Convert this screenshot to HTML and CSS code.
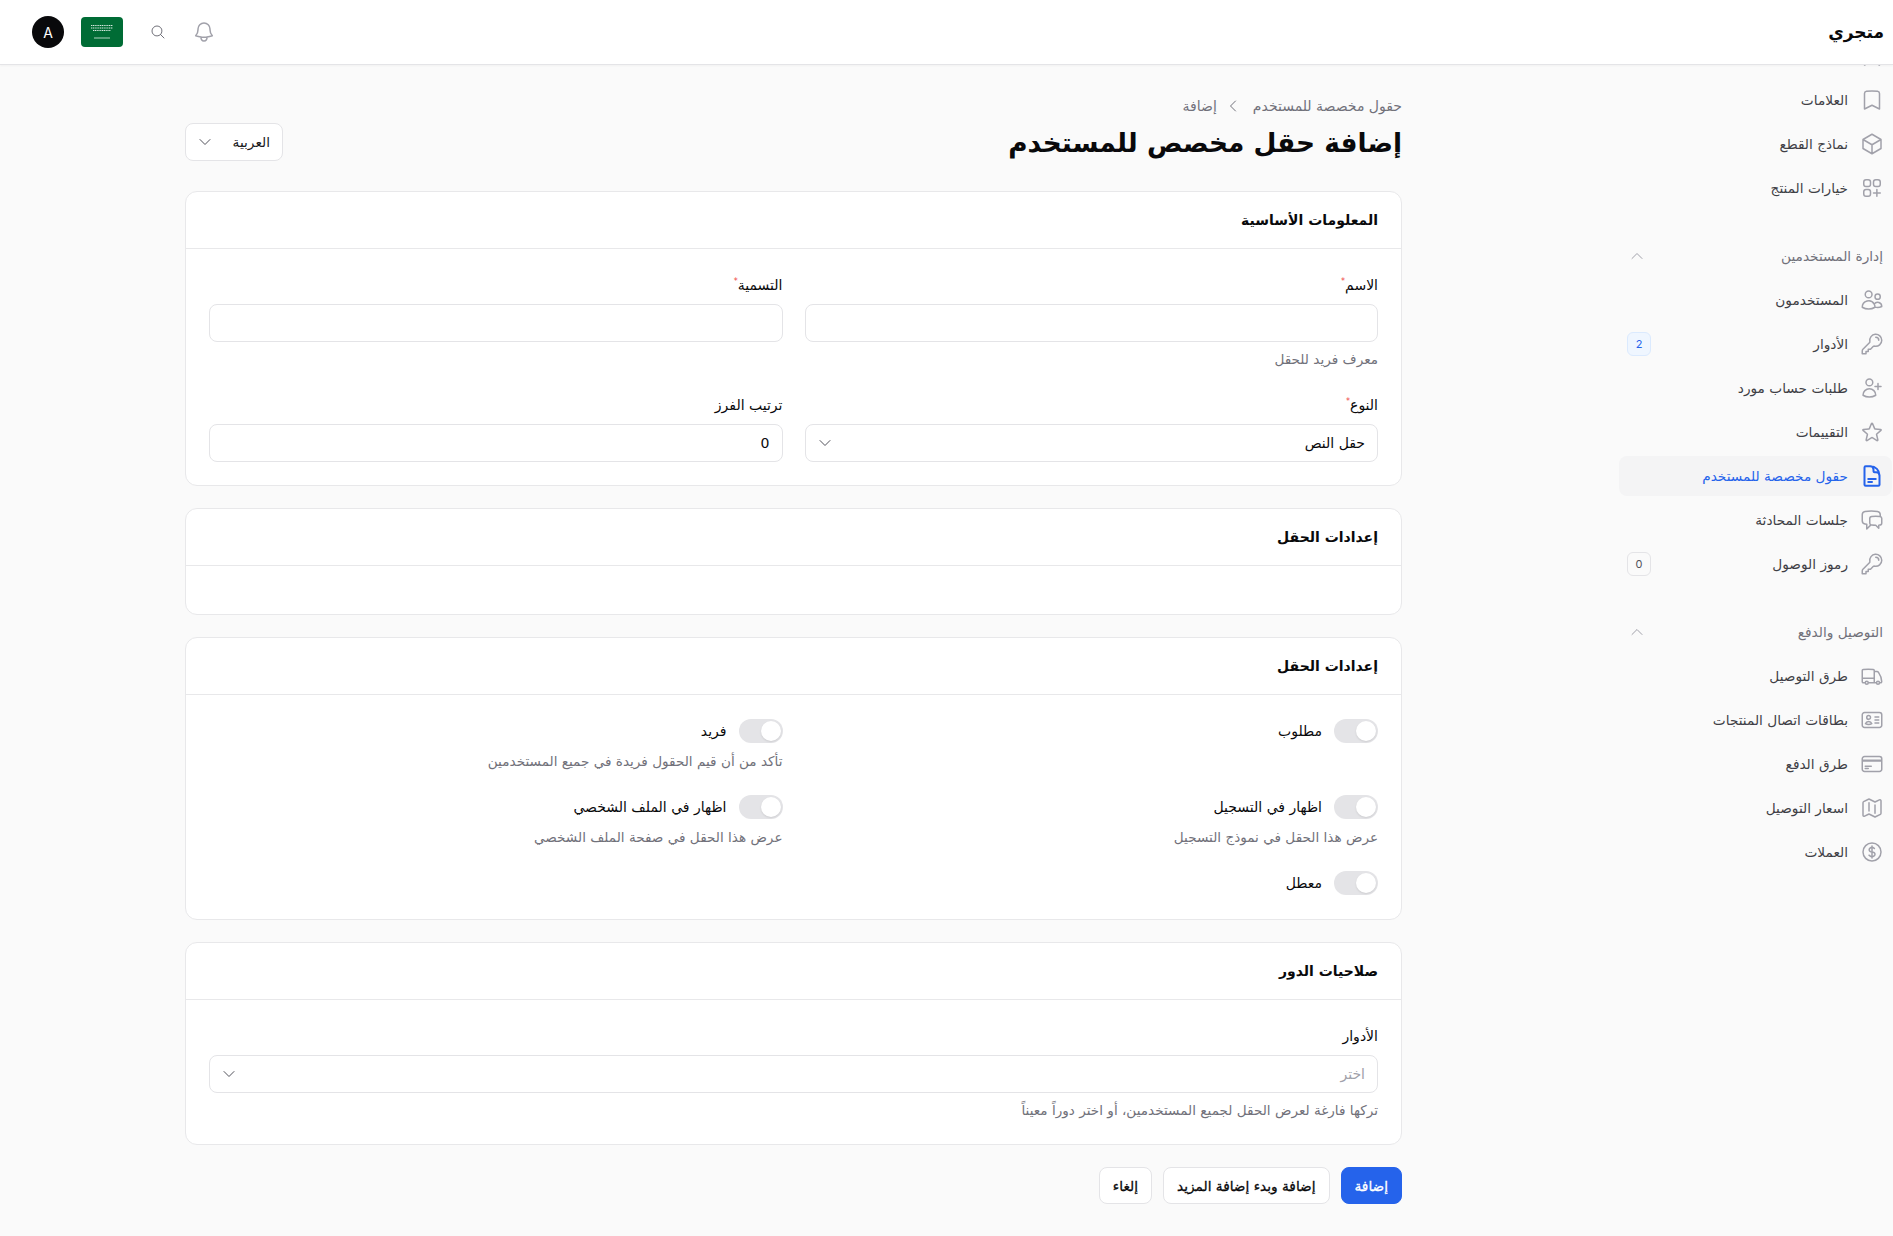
FILE: index.html
```html
<!DOCTYPE html>
<html lang="ar" dir="rtl">
<head>
  <meta charset="UTF-8" />
  <title>إضافة حقل مخصص للمستخدم</title>
  <link rel="stylesheet" href="styles.css">
</head>
<body>

  <svg class="sprite" xmlns="http://www.w3.org/2000/svg">
    <symbol id="i-bookmark" viewBox="0 0 24 24"><path d="M17.593 3.322c1.1.128 1.907 1.077 1.907 2.185V21L12 17.25 4.5 21V5.507c0-1.108.806-2.057 1.907-2.185a48.507 48.507 0 0 1 11.186 0Z"/></symbol>
    <symbol id="i-cube" viewBox="0 0 24 24"><path d="m21 7.5-9-5.25L3 7.5m18 0-9 5.25m9-5.25v9l-9 5.25M3 7.5l9 5.25M3 7.5v9l9 5.25m0-9v9"/></symbol>
    <symbol id="i-squares" viewBox="0 0 24 24"><path d="M13.5 16.875h3.375m0 0h3.375m-3.375 0V13.5m0 6.75v-3.375M6 10.5h2.25a2.25 2.25 0 0 0 2.25-2.25V6a2.25 2.25 0 0 0-2.25-2.25H6A2.25 2.25 0 0 0 3.75 6v2.25A2.25 2.25 0 0 0 6 10.5Zm0 9.75h2.25A2.25 2.25 0 0 0 10.5 18v-2.25a2.25 2.25 0 0 0-2.25-2.25H6a2.25 2.25 0 0 0-2.25 2.25V18A2.25 2.25 0 0 0 6 20.25Zm9.75-9.75H18a2.25 2.25 0 0 0 2.25-2.25V6A2.25 2.25 0 0 0 18 3.75h-2.25A2.25 2.25 0 0 0 13.5 6v2.25a2.25 2.25 0 0 0 2.25 2.25Z"/></symbol>
    <symbol id="i-users" viewBox="0 0 24 24"><path d="M15 19.128a9.38 9.38 0 0 0 2.625.372 9.337 9.337 0 0 0 4.121-.952 4.125 4.125 0 0 0-7.533-2.493M15 19.128v-.003c0-1.113-.285-2.16-.786-3.07M15 19.128v.106A12.318 12.318 0 0 1 8.624 21c-2.331 0-4.512-.645-6.374-1.766l-.001-.109a6.375 6.375 0 0 1 11.964-3.07M12 6.375a3.375 3.375 0 1 1-6.75 0 3.375 3.375 0 0 1 6.75 0Zm8.25 2.25a2.625 2.625 0 1 1-5.25 0 2.625 2.625 0 0 1 5.25 0Z"/></symbol>
    <symbol id="i-key" viewBox="0 0 24 24"><path d="M15.75 5.25a3 3 0 0 1 3 3m3 0a6 6 0 0 1-7.029 5.912c-.563-.097-1.159.026-1.563.43L10.5 17.25H8.25v2.25H6v2.25H2.25v-2.818c0-.597.237-1.17.659-1.591l6.499-6.499c.404-.404.527-1 .43-1.563A6 6 0 1 1 21.75 8.25Z"/></symbol>
    <symbol id="i-user-plus" viewBox="0 0 24 24"><path d="M18 7.5v3m0 0v3m0-3h3m-3 0h-3m-2.25-4.125a3.375 3.375 0 1 1-6.75 0 3.375 3.375 0 0 1 6.75 0ZM3 19.235v-.11a6.375 6.375 0 0 1 12.75 0v.109A12.318 12.318 0 0 1 9.374 21c-2.331 0-4.512-.645-6.374-1.766Z"/></symbol>
    <symbol id="i-star" viewBox="0 0 24 24"><path d="M11.48 3.499a.562.562 0 0 1 1.04 0l2.125 5.111a.563.563 0 0 0 .475.345l5.518.442c.499.04.701.663.321.988l-4.204 3.602a.563.563 0 0 0-.182.557l1.285 5.385a.562.562 0 0 1-.84.61l-4.725-2.885a.562.562 0 0 0-.586 0L6.982 20.54a.562.562 0 0 1-.84-.61l1.285-5.386a.562.562 0 0 0-.182-.557l-4.204-3.602a.562.562 0 0 1 .321-.988l5.518-.442a.563.563 0 0 0 .475-.345L11.48 3.5Z"/></symbol>
    <symbol id="i-doc" viewBox="0 0 24 24"><path d="M19.5 14.25v-2.625a3.375 3.375 0 0 0-3.375-3.375h-1.5A1.125 1.125 0 0 1 13.5 7.125v-1.5a3.375 3.375 0 0 0-3.375-3.375H8.25m0 12.75h7.5m-7.5 3H12M10.5 2.25H5.625c-.621 0-1.125.504-1.125 1.125v17.25c0 .621.504 1.125 1.125 1.125h12.75c.621 0 1.125-.504 1.125-1.125V11.25a9 9 0 0 0-9-9Z"/></symbol>
    <symbol id="i-chat" viewBox="0 0 24 24"><path d="M20.25 8.511c.884.284 1.5 1.128 1.5 2.097v4.286c0 1.136-.847 2.1-1.98 2.193-.34.027-.68.052-1.02.072v3.091l-3-3c-1.354 0-2.694-.055-4.02-.163a2.115 2.115 0 0 1-.825-.242m9.345-8.334a2.126 2.126 0 0 0-.476-.095 48.64 48.64 0 0 0-8.048 0c-1.131.094-1.976 1.057-1.976 2.192v4.286c0 .837.46 1.58 1.155 1.951m9.345-8.334V6.637c0-1.621-1.152-3.026-2.76-3.235A48.455 48.455 0 0 0 11.25 3c-2.115 0-4.198.137-6.24.402-1.608.209-2.76 1.614-2.76 3.235v6.226c0 1.621 1.152 3.026 2.76 3.235.577.075 1.157.14 1.74.194V21l4.155-4.155"/></symbol>
    <symbol id="i-truck" viewBox="0 0 24 24"><path d="M8.25 18.75a1.5 1.5 0 0 1-3 0m3 0a1.5 1.5 0 0 0-3 0m3 0h6m-9 0H3.375a1.125 1.125 0 0 1-1.125-1.125V14.25m17.25 4.5a1.5 1.5 0 0 1-3 0m3 0a1.5 1.5 0 0 0-3 0m3 0h1.125c.621 0 1.129-.504 1.09-1.124a17.902 17.902 0 0 0-3.213-9.193 2.056 2.056 0 0 0-1.58-.86H14.25M16.5 18.75h-2.25m0-11.177v-.958c0-.568-.422-1.048-.987-1.106a48.554 48.554 0 0 0-10.026 0 1.106 1.106 0 0 0-.987 1.106v7.635m12-6.677v6.677m0 4.5v-4.5m0 0h-12"/></symbol>
    <symbol id="i-id" viewBox="0 0 24 24"><path d="M15 9h3.75M15 12h3.75M15 15h3.75M4.5 19.5h15a2.25 2.25 0 0 0 2.25-2.25V6.75A2.25 2.25 0 0 0 19.5 4.5h-15a2.25 2.25 0 0 0-2.25 2.25v10.5A2.25 2.25 0 0 0 4.5 19.5Zm6-10.125a1.875 1.875 0 1 1-3.75 0 1.875 1.875 0 0 1 3.75 0Zm1.294 6.336a6.721 6.721 0 0 1-3.17.789 6.721 6.721 0 0 1-3.168-.789 3.376 3.376 0 0 1 6.338 0Z"/></symbol>
    <symbol id="i-card" viewBox="0 0 24 24"><path d="M2.25 8.25h19.5M2.25 9h19.5m-16.5 5.25h6m-6 2.25h3m-3.75 3h15a2.25 2.25 0 0 0 2.25-2.25V6.75A2.25 2.25 0 0 0 19.5 4.5h-15a2.25 2.25 0 0 0-2.25 2.25v10.5A2.25 2.25 0 0 0 4.5 19.5Z"/></symbol>
    <symbol id="i-map" viewBox="0 0 24 24"><path d="M9 6.75V15m6-6v8.25m.503 3.498 4.875-2.437c.381-.19.622-.58.622-1.006V4.82c0-.836-.88-1.38-1.628-1.006l-3.869 1.934c-.317.159-.69.159-1.006 0L9.503 3.252a1.125 1.125 0 0 0-1.006 0L3.622 5.689C3.24 5.88 3 6.27 3 6.695V19.18c0 .836.88 1.38 1.628 1.006l3.869-1.934c.317-.159.69-.159 1.006 0l4.994 2.497c.317.158.69.158 1.006 0Z"/></symbol>
    <symbol id="i-dollar" viewBox="0 0 24 24"><path d="M12 6v12m-3-2.818.879.659c1.171.879 3.07.879 4.242 0 1.172-.879 1.172-2.303 0-3.182C13.536 12.219 12.768 12 12 12c-.725 0-1.45-.22-2.003-.659-1.106-.879-1.106-2.303 0-3.182s2.9-.879 4.006 0l.415.33M21 12a9 9 0 1 1-18 0 9 9 0 0 1 18 0Z"/></symbol>
    <symbol id="i-bell" viewBox="0 0 24 24"><path d="M14.857 17.082a23.848 23.848 0 0 0 5.454-1.31A8.967 8.967 0 0 1 18 9.75V9A6 6 0 0 0 6 9v.75a8.967 8.967 0 0 1-2.312 6.022c1.733.64 3.56 1.085 5.455 1.31m5.714 0a24.255 24.255 0 0 1-5.714 0m5.714 0a3 3 0 1 1-5.714 0"/></symbol>
    <symbol id="i-search" viewBox="0 0 24 24"><path d="m21 21-5.197-5.197m0 0A7.5 7.5 0 1 0 5.196 5.196a7.5 7.5 0 0 0 10.607 10.607Z"/></symbol>
    <symbol id="i-down" viewBox="0 0 24 24"><path d="m19.5 8.25-7.5 7.5-7.5-7.5"/></symbol>
    <symbol id="i-up" viewBox="0 0 24 24"><path d="m4.5 15.75 7.5-7.5 7.5 7.5"/></symbol>
    <symbol id="i-left" viewBox="0 0 24 24"><path d="M15.75 19.5 8.25 12l7.5-7.5"/></symbol>
  </svg>

  <header class="topbar">
    <div class="logo">متجري</div>
    <div class="top-tools">
      <svg class="icon bell"><use href="#i-bell"/></svg>
      <svg class="icon search"><use href="#i-search"/></svg>
      <svg class="flag" viewBox="0 0 42 30">
        <rect width="42" height="30" fill="#006c35"/>
        <path d="M10 8.500h22M10 11h22M12 13.500h18" stroke="#fff" stroke-width="1.200" stroke-dasharray="1.200 .6" opacity=".85"/>
        <path d="M13 21h16" stroke="#fff" stroke-width=".7"/>
      </svg>
      <div class="avatar">A</div>
    </div>
  </header>

  <div class="layout">
    <aside class="sidebar">
      <nav class="nav">
        <a class="nav-item nav-peek"><svg class="icon"><use href="#i-bookmark"/></svg><span>الماركات</span></a>
        <a class="nav-item"><svg class="icon"><use href="#i-bookmark"/></svg><span>العلامات</span></a>
        <a class="nav-item"><svg class="icon"><use href="#i-cube"/></svg><span>نماذج القطع</span></a>
        <a class="nav-item"><svg class="icon"><use href="#i-squares"/></svg><span>خيارات المنتج</span></a>

        <div class="nav-group">
          <span>إدارة المستخدمين</span>
          <svg class="icon chev"><use href="#i-up"/></svg>
        </div>
        <a class="nav-item"><svg class="icon"><use href="#i-users"/></svg><span>المستخدمون</span></a>
        <a class="nav-item"><svg class="icon"><use href="#i-key"/></svg><span>الأدوار</span><b class="badge badge-blue">2</b></a>
        <a class="nav-item"><svg class="icon"><use href="#i-user-plus"/></svg><span>طلبات حساب مورد</span></a>
        <a class="nav-item"><svg class="icon"><use href="#i-star"/></svg><span>التقييمات</span></a>
        <a class="nav-item active"><svg class="icon"><use href="#i-doc"/></svg><span>حقول مخصصة للمستخدم</span></a>
        <a class="nav-item"><svg class="icon"><use href="#i-chat"/></svg><span>جلسات المحادثة</span></a>
        <a class="nav-item"><svg class="icon"><use href="#i-key"/></svg><span>رموز الوصول</span><b class="badge">0</b></a>

        <div class="nav-group">
          <span>التوصيل والدفع</span>
          <svg class="icon chev"><use href="#i-up"/></svg>
        </div>
        <a class="nav-item"><svg class="icon"><use href="#i-truck"/></svg><span>طرق التوصيل</span></a>
        <a class="nav-item"><svg class="icon"><use href="#i-id"/></svg><span>بطاقات اتصال المنتجات</span></a>
        <a class="nav-item"><svg class="icon"><use href="#i-card"/></svg><span>طرق الدفع</span></a>
        <a class="nav-item"><svg class="icon"><use href="#i-map"/></svg><span>اسعار التوصيل</span></a>
        <a class="nav-item"><svg class="icon"><use href="#i-dollar"/></svg><span>العملات</span></a>
      </nav>
    </aside>

    <main class="main">
      <div class="crumbs">
        <span>حقول مخصصة للمستخدم</span>
        <svg class="icon crumb-sep"><use href="#i-left"/></svg>
        <span>إضافة</span>
      </div>
      <div class="page-head">
        <h1>إضافة حقل مخصص للمستخدم</h1>
        <div class="lang">
          <span>العربية</span>
          <svg class="icon lang-chev"><use href="#i-down"/></svg>
        </div>
      </div>

      <section class="card">
        <h2 class="card-head">المعلومات الأساسية</h2>
        <div class="card-body grid basic">
          <div class="field">
            <label>الاسم<sup>*</sup></label>
            <input class="input" type="text">
            <p class="help">معرف فريد للحقل</p>
          </div>
          <div class="field">
            <label>التسمية<sup>*</sup></label>
            <input class="input" type="text">
          </div>
          <div class="field">
            <label>النوع<sup>*</sup></label>
            <div class="input select"><span>حقل النص</span><svg class="icon sel-chev"><use href="#i-down"/></svg></div>
          </div>
          <div class="field">
            <label>ترتيب الفرز</label>
            <input class="input" type="text" value="0">
          </div>
        </div>
      </section>

      <section class="card">
        <h2 class="card-head">إعدادات الحقل</h2>
        <div class="card-body"></div>
      </section>

      <section class="card">
        <h2 class="card-head">إعدادات الحقل</h2>
        <div class="card-body grid">
          <div class="switch-field">
            <div class="switch-row"><i class="switch"></i><span>مطلوب</span></div>
          </div>
          <div class="switch-field">
            <div class="switch-row"><i class="switch"></i><span>فريد</span></div>
            <p class="help">تأكد من أن قيم الحقول فريدة في جميع المستخدمين</p>
          </div>
          <div class="switch-field">
            <div class="switch-row"><i class="switch"></i><span>اظهار في التسجيل</span></div>
            <p class="help">عرض هذا الحقل في نموذج التسجيل</p>
          </div>
          <div class="switch-field">
            <div class="switch-row"><i class="switch"></i><span>اظهار في الملف الشخصي</span></div>
            <p class="help">عرض هذا الحقل في صفحة الملف الشخصي</p>
          </div>
          <div class="switch-field">
            <div class="switch-row"><i class="switch"></i><span>معطل</span></div>
          </div>
        </div>
      </section>

      <section class="card">
        <h2 class="card-head">صلاحيات الدور</h2>
        <div class="card-body">
          <div class="field">
            <label>الأدوار</label>
            <div class="input select placeholder"><span>اختر</span><svg class="icon sel-chev"><use href="#i-down"/></svg></div>
            <p class="help">تركها فارغة لعرض الحقل لجميع المستخدمين، أو اختر دوراً معيناً</p>
          </div>
        </div>
      </section>

      <div class="actions">
        <button class="btn btn-primary">إضافة</button>
        <button class="btn">إضافة وبدء إضافة المزيد</button>
        <button class="btn">إلغاء</button>
      </div>
    </main>
  </div>

</body>
</html>
```

FILE: styles.css
```css
* {
  box-sizing: border-box;
}

body {
  margin: 0;
  background: #fafafa;
  color: #09090b;
  font-family: "DejaVu Sans", "Noto Sans", sans-serif;
  font-size: 14px;
  height: 1236px;
  overflow: hidden;
}

.sprite {
  display: none;
}

.icon {
  width: 24px;
  height: 24px;
  flex: none;
  fill: none;
  stroke: #a1a1aa;
  stroke-width: 1.5;
  stroke-linecap: round;
  stroke-linejoin: round;
}

/* top bar */
.topbar {
  position: relative;
  z-index: 2;
  height: 65px;
  background: #fff;
  border-bottom: 1px solid #e4e4e7;
  box-shadow: 0 1px 2px rgba(0, 0, 0, .04);
  display: flex;
  align-items: center;
  justify-content: space-between;
  padding: 0 9px 0 32px;
}

.logo {
  font-size: 17px;
  font-weight: 700;
}

.top-tools {
  display: flex;
  align-items: center;
}

.bell {
  margin-left: 26px;
}

.search {
  width: 16px;
  height: 16px;
  margin-left: 27px;
  stroke: #71717a;
}

.flag {
  width: 42px;
  height: 30px;
  border-radius: 4px;
  margin-left: 17px;
}

.avatar {
  width: 32px;
  height: 32px;
  border-radius: 50%;
  background: #09090b;
  color: #fff;
  font-family: Inter, sans-serif;
  font-size: 14px;
  display: flex;
  align-items: center;
  justify-content: center;
}

.layout {
  display: flex;
  height: 1171px;
}

/* sidebar */
.sidebar {
  width: 306px;
  flex: none;
  overflow: hidden;
  padding: 0 1px 0 32px;
  font-size: 13.7px;
}

.nav {
  display: flex;
  flex-direction: column;
  gap: 4px;
  margin-top: -29px;
}

.nav-item {
  height: 40px;
  display: flex;
  align-items: center;
  gap: 12px;
  padding: 0 8px;
  border-radius: 8px;
  color: #3f3f46;
}

.nav-item span {
  flex: 1;
}

.nav-item.active {
  background: #f4f4f5;
  color: #2563eb;
}

.nav-item.active .icon {
  stroke: #2563eb;
  stroke-width: 2;
}

.nav-group {
  height: 36px;
  margin: 26px 0 2px;
  padding: 0 9px 0 8px;
  display: flex;
  align-items: center;
  justify-content: space-between;
  color: #71717a;
}

.chev {
  width: 16px;
  height: 16px;
  margin-left: 2px;
}

.badge {
  width: 24px;
  height: 24px;
  flex: none;
  border: 1px solid #e4e4e7;
  border-radius: 6px;
  font-family: Inter, sans-serif;
  font-size: 11px;
  font-weight: 400;
  color: #52525b;
  display: flex;
  align-items: center;
  justify-content: center;
}

.badge-blue {
  background: #eff6ff;
  border-color: #dbeafe;
  color: #2563eb;
}

/* main column */
.main {
  flex: 1;
  min-width: 0;
  padding: 31px 185px 0;
}

.crumbs {
  height: 20px;
  display: flex;
  align-items: center;
  gap: 12px;
  color: #71717a;
}

.crumb-sep {
  width: 16px;
  height: 16px;
  margin-left: -4px;
  stroke: #71717a;
}

.page-head {
  height: 38px;
  margin-top: 7px;
  display: flex;
  align-items: center;
  justify-content: space-between;
}

h1 {
  margin: 0;
  font-size: 26.4px;
  font-weight: 700;
}

.lang {
  width: 98px;
  height: 38px;
  padding: 0 12px 0 11px;
  background: #fff;
  border: 1px solid #e4e4e7;
  border-radius: 8px;
  display: flex;
  align-items: center;
  justify-content: space-between;
  font-size: 13.7px;
  color: #18181b;
}

.lang-chev,
.sel-chev {
  width: 16px;
  height: 16px;
  stroke: #52525b;
}

.card {
  margin-top: 22px;
  background: #fff;
  border: 1px solid #e8e8ea;
  border-radius: 12px;
}

.page-head + .card {
  margin-top: 30px;
}

.card-head {
  margin: 0;
  height: 57px;
  padding: 0 23px;
  border-bottom: 1px solid #e8e8ea;
  display: flex;
  align-items: center;
  font-size: 14px;
  font-weight: 700;
}

.card-body {
  min-height: 48px;
  padding: 24px 23px;
}

.card-body.basic {
  padding-bottom: 23px;
}

.grid {
  display: grid;
  grid-template-columns: 1fr 1fr;
  gap: 24px 22px;
}

.field label {
  display: block;
  height: 24px;
  line-height: 24px;
  margin-bottom: 7px;
}

sup {
  color: #ef4444;
  font-size: 8px;
  line-height: 0;
}

.input {
  display: block;
  width: 100%;
  height: 38px;
  padding: 0 12px 0 11px;
  background: #fff;
  border: 1px solid #e4e4e7;
  border-radius: 8px;
  font: inherit;
  color: inherit;
}

.select {
  display: flex;
  align-items: center;
  justify-content: space-between;
}

.placeholder {
  color: #a1a1aa;
}

.help {
  margin: 7px 0 0;
  line-height: 20px;
  font-size: 13.6px;
  color: #71717a;
}

.switch-row {
  height: 24px;
  display: flex;
  align-items: center;
  gap: 12px;
}

.switch {
  position: relative;
  width: 44px;
  height: 24px;
  border-radius: 12px;
  background: #e4e4e7;
}

.switch::after {
  content: "";
  position: absolute;
  top: 2px;
  right: 2px;
  width: 20px;
  height: 20px;
  border-radius: 50%;
  background: #fff;
  box-shadow: 0 1px 2px rgba(0, 0, 0, .1);
}

.switch-field .help {
  margin-top: 8px;
}

.actions {
  margin-top: 22px;
  display: flex;
  gap: 11px;
}

.btn {
  height: 37px;
  padding: 0 13px;
  background: #fff;
  border: 1px solid #e4e4e7;
  border-radius: 8px;
  font: inherit;
  font-size: 13.7px;
  -webkit-text-stroke: .3px currentColor;
  color: #09090b;
}

.btn-primary {
  background: #2563eb;
  border-color: #2563eb;
  color: #fff;
}
```
